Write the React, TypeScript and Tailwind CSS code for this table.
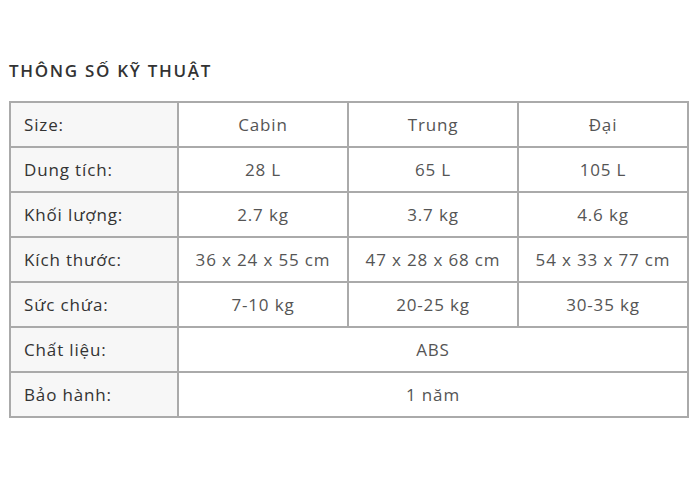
import React from 'react';

const rows: { label: string; values: string[] }[] = [
  { label: 'Size:', values: ['Cabin', 'Trung', 'Đại'] },
  { label: 'Dung tích:', values: ['28 L', '65 L', '105 L'] },
  { label: 'Khối lượng:', values: ['2.7 kg', '3.7 kg', '4.6 kg'] },
  { label: 'Kích thước:', values: ['36 x 24 x 55 cm', '47 x 28 x 68 cm', '54 x 33 x 77 cm'] },
  { label: 'Sức chứa:', values: ['7-10 kg', '20-25 kg', '30-35 kg'] },
  { label: 'Chất liệu:', values: ['ABS'] },
  { label: 'Bảo hành:', values: ['1 năm'] },
];

const App = () => {
  return (
    <div className="min-h-[500px] bg-white px-[9px] pt-[60px] font-['Open_Sans',sans-serif]">
      <h2 className="mb-[19px] text-[17px] font-semibold leading-[22px] tracking-[0.1em] text-[#333]">
        THÔNG SỐ KỸ THUẬT
      </h2>
      <table className="w-[678px] table-fixed border-collapse border-2 border-[#aaa] text-[17px] tracking-[0.05em]">
        <colgroup>
          <col className="w-[168px]" />
          <col className="w-[170px]" />
          <col className="w-[170px]" />
          <col className="w-[170px]" />
        </colgroup>
        <tbody>
          {rows.map((r) => (
            <tr key={r.label} className="h-[45px]">
              <td className="border-2 border-[#aaa] bg-[#f7f7f7] pl-[13px] font-medium text-[#333]">
                {r.label}
              </td>
              {r.values.map((v) => (
                <td
                  key={v}
                  colSpan={r.values.length === 1 ? 3 : 1}
                  className="border-2 border-[#aaa] text-center text-[#555]"
                >
                  {v}
                </td>
              ))}
            </tr>
          ))}
        </tbody>
      </table>
    </div>
  );
};

export default App;
